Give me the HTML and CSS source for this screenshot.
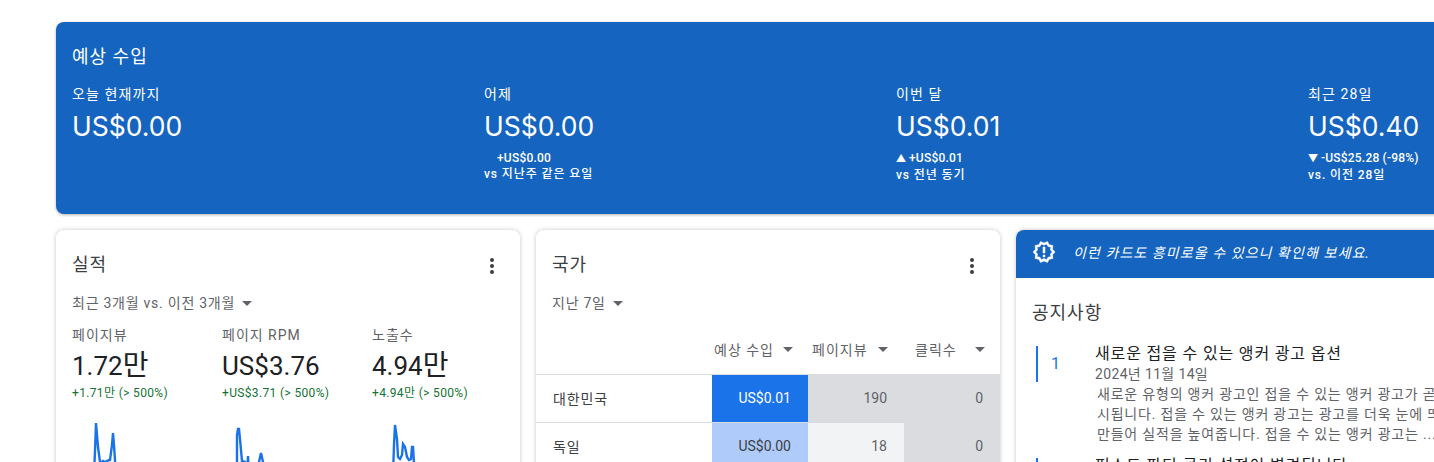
FILE: index.html
```html
<!DOCTYPE html>
<html>
<head>
  <meta charset="utf-8">
  <title>AdSense</title>
  <link rel="stylesheet" href="styles.css">
</head>
<body>
  <div class="page">
    <div class="hero">
      <h2>예상 수입</h2>
      <div class="hero-stats">
        <div class="stat">
          <div class="stat-label">오늘 현재까지</div>
          <div class="stat-value">US$0.00</div>
        </div>
        <div class="stat">
          <div class="stat-label">어제</div>
          <div class="stat-value">US$0.00</div>
          <div class="stat-delta"><span class="arrow"></span>+US$0.00</div>
          <div class="stat-vs">vs 지난주 같은 요일</div>
        </div>
        <div class="stat">
          <div class="stat-label">이번 달</div>
          <div class="stat-value">US$0.01</div>
          <div class="stat-delta"><span class="arrow">▲</span>+US$0.01</div>
          <div class="stat-vs">vs 전년 동기</div>
        </div>
        <div class="stat">
          <div class="stat-label">최근 28일</div>
          <div class="stat-value">US$0.40</div>
          <div class="stat-delta"><span class="arrow">▼</span>-US$25.28 (-98%)</div>
          <div class="stat-vs">vs. 이전 28일</div>
        </div>
      </div>
    </div>

    <div class="cards">
      <!-- 실적 -->
      <div class="card">
        <div class="card-head">
          <h3>실적</h3>
          <span class="dots"><i></i><i></i><i></i></span>
        </div>
        <div class="range">최근 3개월 vs. 이전 3개월<span class="caret"></span></div>
        <div class="metrics">
          <div class="metric">
            <div class="metric-label">페이지뷰</div>
            <div class="metric-value">1.72<span class="unit">만</span></div>
            <div class="metric-delta">+1.71만 (&gt; 500%)</div>
            <svg class="spark" width="150" height="60" viewBox="0 0 150 60">
              <polyline points="22,60 23,36 24,8 26,32 28,47 30,47 31,46 33,47 35,46 37,45 38,45 40,30 41,18 42,30 44,60"/>
            </svg>
          </div>
          <div class="metric">
            <div class="metric-label">페이지 RPM</div>
            <div class="metric-value">US$3.76</div>
            <div class="metric-delta">+US$3.71 (&gt; 500%)</div>
            <svg class="spark" width="150" height="60" viewBox="0 0 150 60">
              <polyline points="15,60 15,20 16,14 17,14 18,24 20,46 23,47 25,60 26,41 27,60 35,60 37,47 39,38 41,47 42,60"/>
            </svg>
          </div>
          <div class="metric">
            <div class="metric-label">노출수</div>
            <div class="metric-value">4.94<span class="unit">만</span></div>
            <div class="metric-delta">+4.94만 (&gt; 500%)</div>
            <svg class="spark" width="150" height="60" viewBox="0 0 150 60">
              <polyline points="21,60 22,30 23,10 25,24 26,42 28,44 30,40 31,29 33,32 35,42 37,45 39,44 40,32 41,32 42,48 43,60"/>
            </svg>
          </div>
        </div>
      </div>

      <!-- 국가 -->
      <div class="card">
        <div class="card-head">
          <h3>국가</h3>
          <span class="dots"><i></i><i></i><i></i></span>
        </div>
        <div class="range">지난 7일<span class="caret"></span></div>
        <table class="countries">
          <thead>
            <tr>
              <th></th>
              <th><div class="th-in"><span>예상 수입</span><span class="caret"></span></div></th>
              <th><div class="th-in mid"><span>페이지뷰</span><span class="caret"></span></div></th>
              <th><div class="th-in wide"><span>클릭수</span><span class="caret"></span></div></th>
            </tr>
          </thead>
          <tbody>
            <tr>
              <td class="name">대한민국</td>
              <td class="blue-1">US$0.01</td>
              <td class="grey-1">190</td>
              <td class="grey-1">0</td>
            </tr>
            <tr>
              <td class="name">독일</td>
              <td class="blue-2">US$0.00</td>
              <td class="grey-2">18</td>
              <td class="grey-1">0</td>
            </tr>
          </tbody>
        </table>
      </div>

      <!-- 공지사항 -->
      <div class="card notice-card">
        <div class="notice-banner">
          <svg class="badge" width="24" height="24" viewBox="0 0 24 24">
            <path d="M23 12l-2.44-2.78.34-3.68-3.61-.82-1.89-3.18L12 3 8.6 1.54 6.71 4.72l-3.61.81.34 3.68L1 12l2.44 2.78-.34 3.69 3.61.82 1.89 3.18L12 21l3.4 1.46 1.89-3.18 3.61-.82-.34-3.68L23 12zm-4.51 1.84l.26 2.79-2.74.62-1.43 2.41L12 18.55l-2.58 1.11-1.43-2.41-2.74-.62.26-2.8L3.66 12l1.85-2.12-.26-2.78 2.74-.61 1.43-2.41L12 5.18l2.58-1.11 1.43 2.41 2.74.62-.26 2.79L20.34 12l-1.85 1.84zM11 15h2v2h-2zm0-8h2v6h-2z"/>
          </svg>
          <em>이런 카드도 흥미로울 수 있으니 확인해 보세요.</em>
        </div>
        <div class="notice-body">
          <h3>공지사항</h3>
          <div class="notice">
            <div class="notice-num">1</div>
            <div class="notice-text">
              <div class="notice-title">새로운 접을 수 있는 앵커 광고 옵션</div>
              <div class="notice-date">2024년 11월 14일</div>
              <div class="notice-desc">새로운 유형의 앵커 광고인 접을 수 있는 앵커 광고가 곧 출<br>시됩니다. 접을 수 있는 앵커 광고는 광고를 더욱 눈에 띄게<br>만들어 실적을 높여줍니다. 접을 수 있는 앵커 광고는 ...</div>
            </div>
          </div>
          <div class="notice">
            <div class="notice-num">2</div>
            <div class="notice-text">
              <div class="notice-title">퍼스트 파티 쿠키 설정이 변경됩니다</div>
            </div>
          </div>
        </div>
      </div>
    </div>
  </div>
</body>
</html>
```

FILE: styles.css
```css
html, body {
  margin: 0;
  padding: 0;
  height: 462px;
  overflow: hidden;
  background: #fff;
}

body {
  font-family: Roboto, 'Noto Sans CJK KR', sans-serif;
  color: #3c4043;
}

.page {
  width: 1424px;
  padding: 22px 0 0 56px;
}

/* top blue card */
.hero {
  background: #1565c0;
  color: #fff;
  height: 192px;
  box-sizing: border-box;
  padding: 22px 16px 0;
  border-radius: 8px 0 0 8px;
  box-shadow: 0 1px 3px rgba(60, 64, 67, 0.4);
}

.hero h2 {
  margin: 0;
  font-size: 18px;
  font-weight: 400;
  line-height: 26px;
  letter-spacing: 1px;
}

.hero-stats {
  display: grid;
  grid-template-columns: repeat(4, 412px);
  margin-top: 14px;
}

.stat-label {
  font-size: 14px;
  line-height: 20px;
  letter-spacing: 1.1px;
}

.stat-value {
  font-family: Inter, Roboto, sans-serif;
  font-size: 26.5px;
  font-weight: 400;
  line-height: 36px;
  margin-top: 4px;
  margin-bottom: 6px;
}

.stat-delta,
.stat-vs {
  font-size: 12px;
  line-height: 16px;
  font-weight: 500;
  white-space: nowrap;
}

.stat-delta {
  letter-spacing: 0.2px;
}

.stat-vs {
  letter-spacing: 0.9px;
}

.arrow {
  display: inline-block;
  width: 13px;
  font-size: 10px;
}

/* cards */
.cards {
  display: grid;
  grid-template-columns: repeat(3, 464px);
  gap: 16px;
  margin-top: 16px;
}

.card {
  background: #fff;
  border-radius: 8px;
  box-shadow: 0 0 4px rgba(60, 64, 67, 0.3);
  height: 300px;
  overflow: hidden;
}

.card-head {
  display: flex;
  justify-content: space-between;
  align-items: center;
  padding: 22px 16px 0;
  height: 26px;
}

.card h3 {
  margin: 0;
  font-size: 18px;
  font-weight: 400;
  line-height: 26px;
  letter-spacing: 1px;
  color: #3c4043;
}

.dots {
  display: flex;
  flex-direction: column;
  gap: 2px;
  padding: 2px 10px 0 0;
}

.dots i {
  width: 4px;
  height: 4px;
  border-radius: 50%;
  background: #3c4043;
}

.range {
  display: flex;
  align-items: center;
  padding: 15px 16px 0;
  font-size: 14px;
  line-height: 20px;
  letter-spacing: 0.75px;
  color: #5f6368;
}

.caret {
  display: inline-block;
  width: 0;
  height: 0;
  margin-left: 7px;
  border-left: 5.5px solid transparent;
  border-right: 5.5px solid transparent;
  border-top: 5.5px solid #5f6368;
}

/* 실적 */
.metrics {
  display: grid;
  grid-template-columns: repeat(3, 150px);
  padding: 12px 16px 0;
}

.metric-label {
  font-size: 14px;
  line-height: 20px;
  letter-spacing: 1px;
  color: #5f6368;
}

.metric-value {
  font-size: 26px;
  line-height: 36px;
  margin-top: 3px;
  color: #202124;
}

.unit {
  font-size: 28px;
}

.metric-delta {
  font-size: 12px;
  line-height: 16px;
  margin-top: 1px;
  letter-spacing: 0.35px;
  color: #137333;
  white-space: nowrap;
}

.spark {
  display: block;
  margin-top: 14px;
}

.spark polyline {
  fill: none;
  stroke: #1a73e8;
  stroke-width: 2.4;
}

/* 국가 */
.countries {
  width: 464px;
  table-layout: fixed;
  border-collapse: collapse;
  margin-top: 17px;
  font-size: 14px;
}

.countries th:first-child {
  width: 176px;
}

.countries th {
  height: 38px;
  padding: 0 0 6px;
  font-weight: 400;
  color: #5f6368;
  border-bottom: 1px solid #dadce0;
}

.th-in {
  display: flex;
  align-items: center;
  padding-left: 2px;
  letter-spacing: 1px;
}

.th-in .caret {
  margin-left: 9px;
}

.th-in.mid {
  padding-left: 4px;
}

.th-in.mid .caret {
  margin-left: 10px;
}

.th-in.wide {
  padding-left: 11px;
}

.th-in.wide .caret {
  margin-left: 18px;
}

.countries td {
  height: 45px;
  padding: 0 17px 2px 0;
  text-align: right;
  border-bottom: 1px solid #dadce0;
  color: #5f6368;
}

.countries td.name {
  padding: 0 0 2px 17px;
  text-align: left;
  letter-spacing: 0.9px;
  color: #3c4043;
}

.blue-1 {
  background: #1a73e8;
  color: #fff !important;
}

.blue-2 {
  background: #aecbfa;
  color: #3c4043 !important;
}

.grey-1 {
  background: #dadce0;
}

.grey-2 {
  background: #f1f3f4;
}

/* 공지사항 */
.notice-banner {
  display: flex;
  align-items: center;
  gap: 17px;
  height: 44px;
  padding: 0 0 4px 16px;
  background: #1565c0;
  color: #fff;
  font-size: 14px;
  letter-spacing: 1.08px;
}

.badge {
  fill: #fff;
  stroke: #fff;
  stroke-width: 0.5;
}

.notice-body {
  padding: 22px 16px 0;
}

.notice {
  display: flex;
  margin: 20px 0 76px 4px;
  height: 36px;
  border-left: 2px solid #1a73e8;
}

.notice-num {
  width: 57px;
  padding-left: 13px;
  box-sizing: border-box;
  font-size: 16px;
  line-height: 36px;
  color: #1a73e8;
}

.notice-text {
  white-space: nowrap;
}

.notice-title {
  font-size: 16px;
  line-height: 16px;
  letter-spacing: 0.85px;
  color: #202124;
}

.notice-date {
  font-size: 14px;
  line-height: 20px;
  margin-top: 2px;
  letter-spacing: 0.35px;
  color: #5f6368;
}

.notice-desc {
  font-size: 14px;
  line-height: 20px;
  margin-left: 2px;
  letter-spacing: 0.8px;
  color: #5f6368;
}
```
